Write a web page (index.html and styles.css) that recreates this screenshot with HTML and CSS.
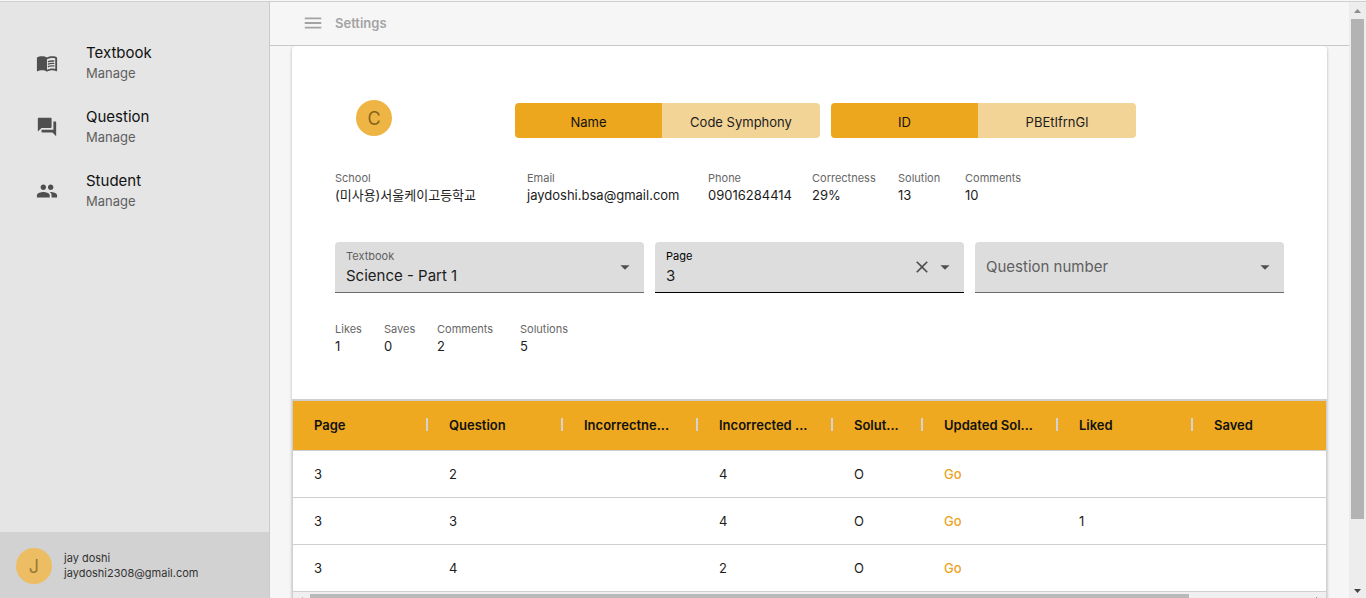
FILE: index.html
```html
<!DOCTYPE html>
<html lang="en">
<head>
<meta charset="utf-8">
<title>Settings</title>
<link rel="stylesheet" href="styles.css">
</head>
<body>
<div class="app">
  <aside class="sidebar">
    <nav class="nav">
      <a class="nav-item" href="#textbook">
        <svg class="nav-icon" viewBox="0 0 24 24"><path d="M21 5c-1.11-.35-2.33-.5-3.5-.5-1.95 0-4.05.4-5.5 1.5-1.45-1.1-3.55-1.5-5.5-1.5S2.45 4.9 1 6v14.65c0 .25.25.5.5.5.1 0 .15-.05.25-.05C3.1 20.45 5.05 20 6.5 20c1.95 0 4.05.4 5.5 1.5 1.35-.85 3.8-1.5 5.5-1.5 1.65 0 3.35.3 4.75 1.05.1.05.15.05.25.05.25 0 .5-.25.5-.5V6c-.6-.45-1.25-.75-2-1zm0 13.5c-1.1-.35-2.3-.5-3.5-.5-1.7 0-4.15.65-5.5 1.5V8c1.35-.85 3.8-1.5 5.5-1.5 1.2 0 2.4.15 3.5.5v11.5z"/><path d="M17.5 10.5c.88 0 1.73.09 2.5.26V9.24c-.79-.15-1.64-.24-2.5-.24-1.7 0-3.24.29-4.5.83v1.66c1.13-.64 2.7-.99 4.5-.99zM13 12.49v1.66c1.13-.64 2.7-.99 4.5-.99.88 0 1.73.09 2.5.26V11.9c-.79-.15-1.64-.24-2.5-.24-1.7 0-3.24.3-4.5.83zM17.5 14.33c-1.7 0-3.24.29-4.5.83v1.66c1.13-.64 2.7-.99 4.5-.99.88 0 1.73.09 2.5.26v-1.52c-.79-.16-1.64-.24-2.5-.24z"/></svg>
        <span class="nav-text"><span class="nav-title">Textbook</span><span class="nav-sub">Manage</span></span>
      </a>
      <a class="nav-item" href="#question">
        <svg class="nav-icon" viewBox="0 0 24 24"><path d="M21 6h-2v9H6v2c0 .55.45 1 1 1h11l4 4V7c0-.55-.45-1-1-1zm-4 6V3c0-.55-.45-1-1-1H3c-.55 0-1 .45-1 1v14l4-4h10c.55 0 1-.45 1-1z"/></svg>
        <span class="nav-text"><span class="nav-title">Question</span><span class="nav-sub">Manage</span></span>
      </a>
      <a class="nav-item" href="#student">
        <svg class="nav-icon" viewBox="0 0 24 24"><path d="M16 11c1.66 0 2.99-1.34 2.99-3S17.66 5 16 5c-1.66 0-3 1.34-3 3s1.34 3 3 3zm-8 0c1.66 0 2.99-1.34 2.99-3S9.66 5 8 5C6.34 5 5 6.34 5 8s1.34 3 3 3zm0 2c-2.33 0-7 1.17-7 3.5V19h14v-2.5c0-2.33-4.67-3.5-7-3.5zm8 0c-.29 0-.62.02-.97.05 1.16.84 1.97 1.97 1.97 3.45V19h6v-2.5c0-2.33-4.67-3.5-7-3.5z"/></svg>
        <span class="nav-text"><span class="nav-title">Student</span><span class="nav-sub">Manage</span></span>
      </a>
    </nav>
    <div class="user">
      <span class="avatar avatar-user">J</span>
      <div class="user-text"><div>jay doshi</div><div>jaydoshi2308@gmail.com</div></div>
    </div>
  </aside>

  <div class="main">
    <header class="topbar">
      <button class="menu-button" type="button" aria-label="Toggle menu">
        <svg class="menu-icon" viewBox="0 0 24 24"><path d="M3 18h18v-2H3v2zm0-5h18v-2H3v2zm0-7v2h18V6H3z"/></svg>
      </button>
      <h1 class="page-title">Settings</h1>
    </header>

    <main class="content">
      <section class="card">
        <div class="profile">
          <div class="avatar-cell"><span class="avatar">C</span></div>
          <div class="pill"><span class="pill-key">Name</span><span class="pill-value">Code Symphony</span></div>
          <div class="pill"><span class="pill-key">ID</span><span class="pill-value">PBEtIfrnGl</span></div>
        </div>

        <dl class="info">
          <div><dt>School</dt><dd>(미사용)서울케이고등학교</dd></div>
          <div><dt>Email</dt><dd>jaydoshi.bsa@gmail.com</dd></div>
          <div><dt>Phone</dt><dd>09016284414</dd></div>
          <div><dt>Correctness</dt><dd>29%</dd></div>
          <div><dt>Solution</dt><dd>13</dd></div>
          <div><dt>Comments</dt><dd>10</dd></div>
        </dl>

        <form class="filters">
          <div class="field">
            <div class="field-body">
              <label class="field-label" for="textbook">Textbook</label>
              <input class="field-input" id="textbook" type="text" value="Science - Part 1">
            </div>
            <button class="icon-button" type="button" aria-label="Open textbooks"><svg class="icon" viewBox="0 0 24 24"><path d="M7 10l5 5 5-5z"/></svg></button>
          </div>
          <div class="field field-active">
            <div class="field-body">
              <label class="field-label" for="page">Page</label>
              <input class="field-input" id="page" type="text" value="3">
            </div>
            <button class="icon-button" type="button" aria-label="Clear page"><svg class="icon icon-clear" viewBox="0 0 24 24"><path d="M19 6.41L17.59 5 12 10.59 6.41 5 5 6.41 10.59 12 5 17.59 6.41 19 12 13.41 17.59 19 19 17.59 13.41 12z"/></svg></button>
            <button class="icon-button" type="button" aria-label="Open pages"><svg class="icon" viewBox="0 0 24 24"><path d="M7 10l5 5 5-5z"/></svg></button>
          </div>
          <div class="field">
            <div class="field-body">
              <input class="field-input" type="text" aria-label="Question number" placeholder="Question number">
            </div>
            <button class="icon-button" type="button" aria-label="Open question numbers"><svg class="icon" viewBox="0 0 24 24"><path d="M7 10l5 5 5-5z"/></svg></button>
          </div>
        </form>

        <dl class="info stats">
          <div><dt>Likes</dt><dd>1</dd></div>
          <div><dt>Saves</dt><dd>0</dd></div>
          <div><dt>Comments</dt><dd>2</dd></div>
          <div><dt>Solutions</dt><dd>5</dd></div>
        </dl>

        <div class="grid">
          <table class="table">
            <colgroup><col class="col"><col class="col"><col class="col"><col class="col"><col class="col-narrow"><col class="col"><col class="col"><col></colgroup>
            <thead>
              <tr>
                <th><div class="head">Page</div></th>
                <th><div class="head">Question</div></th>
                <th><div class="head">Incorrectne...</div></th>
                <th><div class="head">Incorrected ...</div></th>
                <th><div class="head">Solut...</div></th>
                <th><div class="head">Updated Sol...</div></th>
                <th><div class="head">Liked</div></th>
                <th><div class="head">Saved</div></th>
              </tr>
            </thead>
            <tbody>
              <tr><td>3</td><td>2</td><td></td><td>4</td><td>O</td><td><a class="go" href="#q2">Go</a></td><td></td><td></td></tr>
              <tr><td>3</td><td>3</td><td></td><td>4</td><td>O</td><td><a class="go" href="#q3">Go</a></td><td>1</td><td></td></tr>
              <tr><td>3</td><td>4</td><td></td><td>2</td><td>O</td><td><a class="go" href="#q4">Go</a></td><td></td><td></td></tr>
            </tbody>
          </table>
          <div class="hscroll" aria-hidden="true">
            <svg class="arrow" viewBox="0 0 17 17"><path d="M10 5v7L6 8.500z"/></svg>
            <div class="hscroll-track"><div class="hscroll-thumb"></div></div>
            <svg class="arrow" viewBox="0 0 17 17"><path class="dark" d="M7 5v7l4-3.500z"/></svg>
          </div>
        </div>
      </section>
    </main>
  </div>

  <div class="vscroll" aria-hidden="true">
    <svg class="arrow" viewBox="0 0 17 17"><path d="M5 11h7L8.500 7z"/></svg>
    <div class="vscroll-track"><div class="vscroll-thumb"></div></div>
    <svg class="arrow" viewBox="0 0 17 17"><path class="dark" d="M5 8h7l-3.500 4z"/></svg>
  </div>
</div>
</body>
</html>
```
FILE: styles.css
```css
* { box-sizing: border-box; }

body {
  margin: 0;
  padding-top: 1px;
  height: 100vh;
  overflow: hidden;
  font-family: Inter, "Noto Sans CJK KR", sans-serif;
  font-size: 13px;
  color: #1c1c1c;
  background: #f6f6f6;
}

h1, dl, dd { margin: 0; }
button, input { font: inherit; color: inherit; }
a { color: inherit; text-decoration: none; }

button {
  display: flex;
  padding: 0;
  border: 0;
  background: none;
}

.app {
  display: flex;
  height: 100%;
  border-top: 1px solid #cfcfcf;
}

/* Sidebar */
.sidebar {
  display: flex;
  flex: 0 0 270px;
  flex-direction: column;
  justify-content: space-between;
  border-right: 1px solid #cbcbcb;
  background: #e5e5e5;
}

.nav {
  display: flex;
  flex-direction: column;
  gap: 24px;
  padding: 41px 36px;
}

.nav-item {
  display: flex;
  align-items: center;
  gap: 28px;
}

.nav-icon { width: 22px; height: 22px; fill: #4f4f4f; }

.nav-text {
  display: flex;
  flex-direction: column;
  line-height: 20px;
}

.nav-title { font-size: 15px; color: #111; }
.nav-sub { color: #5f5f5f; }

.user {
  display: flex;
  align-items: center;
  gap: 12px;
  height: 66px;
  padding: 2px 16px 0;
  background: #d2d2d2;
  color: #333;
  font-size: 11px;
  line-height: 15px;
}

.avatar {
  display: flex;
  align-items: center;
  justify-content: center;
  width: 36px;
  height: 36px;
  border-radius: 50%;
  background: #eeb544;
  color: #88641b;
  font-size: 18px;
}

.avatar-user { background: #ecbd62; color: #9b7735; }

/* Top bar */
.main {
  display: flex;
  flex: 1;
  flex-direction: column;
  min-width: 0;
}

.topbar {
  display: flex;
  flex: 0 0 44px;
  align-items: center;
  gap: 11px;
  padding: 0 32px 1px;
  border-bottom: 1px solid #c8c8c8;
}

.menu-icon { width: 22px; height: 22px; fill: #a3a3a3; }

.page-title {
  font-size: 13px;
  font-weight: 600;
  color: #a3a3a3;
}

.content {
  flex: 1;
  min-height: 0;
  padding: 0 22px;
  overflow: hidden;
}

.card {
  border-radius: 4px;
  background: #fff;
  box-shadow: 0 1px 3px rgba(0, 0, 0, 0.3);
}

/* Profile */
.profile {
  display: flex;
  align-items: center;
  gap: 11px;
  padding: 52px 43px 0;
}

.avatar-cell {
  flex: 0 0 169px;
  padding-left: 21px;
}

.pill {
  display: flex;
  flex: 0 1 305px;
  height: 35px;
  margin-top: 5px;
  overflow: hidden;
  border-radius: 4px;
  line-height: 38px;
  text-align: center;
}

.pill-key { flex: 0 0 147px; background: #eca71f; color: #111; }
.pill-value { flex: 1; background: #f3d497; }

.info {
  display: grid;
  grid-template-columns: 192px 181px 104px 86px 67px auto;
  padding: 31px 43px 0;
}

.info dt {
  font-size: 11px;
  line-height: 18px;
  color: #666;
}

.info dd { line-height: 16px; white-space: nowrap; }

.stats {
  grid-template-columns: 49px 53px 83px auto;
  padding: 27px 43px 45px;
}

/* Filters */
.filters {
  display: grid;
  grid-template-columns: repeat(3, 1fr);
  gap: 11px;
  padding: 39px 43px 0;
}

.field {
  display: flex;
  align-items: center;
  height: 51px;
  padding: 0 8px 0 11px;
  border-bottom: 1px solid #6b6b6b;
  border-radius: 4px 4px 0 0;
  background: #ddd;
}

.field-active { border-bottom-color: #000; }

.field-body {
  display: flex;
  flex: 1;
  flex-direction: column;
  min-width: 0;
  padding-bottom: 2px;
}

.field-label {
  font-size: 11px;
  line-height: 18px;
  color: #5f5f5f;
}

.field-active .field-label { color: #000; }

.field-input {
  width: 100%;
  height: 20px;
  padding: 0;
  border: 0;
  outline: 0;
  background: none;
  font-size: 15px;
}

.field-input::placeholder { color: #5f5f5f; opacity: 1; }

.icon { width: 22px; height: 22px; fill: #505050; }
.icon-clear { width: 24px; height: 20px; }

/* Question table */
.grid {
  border: 1px solid #cfcfcf;
  border-top-width: 2px;
}

.table {
  width: 100%;
  border-collapse: collapse;
  table-layout: fixed;
}

.col { width: 135px; }
.col-narrow { width: 90px; }

.table th, .table td {
  padding: 0 0 0 21px;
  border-bottom: 1px solid #cfcfcf;
  text-align: left;
}

.table th {
  height: 49px;
  padding-bottom: 1px;
  background: #eea920;
  color: #111;
  font-weight: 600;
}

.table td { height: 47px; }

.head {
  display: flex;
  align-items: center;
  justify-content: space-between;
  white-space: nowrap;
}

.head::after {
  width: 2px;
  height: 13px;
  background: #d3d3d3;
  content: "";
}

th:last-child .head::after { display: none; }

.go { color: #eba51f; font-weight: 500; }

/* Scrollbars */
.arrow { flex: 0 0 17px; width: 17px; height: 17px; fill: #8c8c8c; }
.dark { fill: #444; }

.hscroll { display: flex; background: #efefef; }
.hscroll-track { flex: 1; padding: 2px 0; }
.hscroll-thumb { width: 88%; height: 13px; background: #b9b9b9; }

.vscroll {
  display: flex;
  flex: 0 0 17px;
  flex-direction: column;
  background: #ededed;
}

.vscroll-track { flex: 1; padding: 0 2px; }
.vscroll-thumb { height: 89%; background: #b3b3b3; }
```
